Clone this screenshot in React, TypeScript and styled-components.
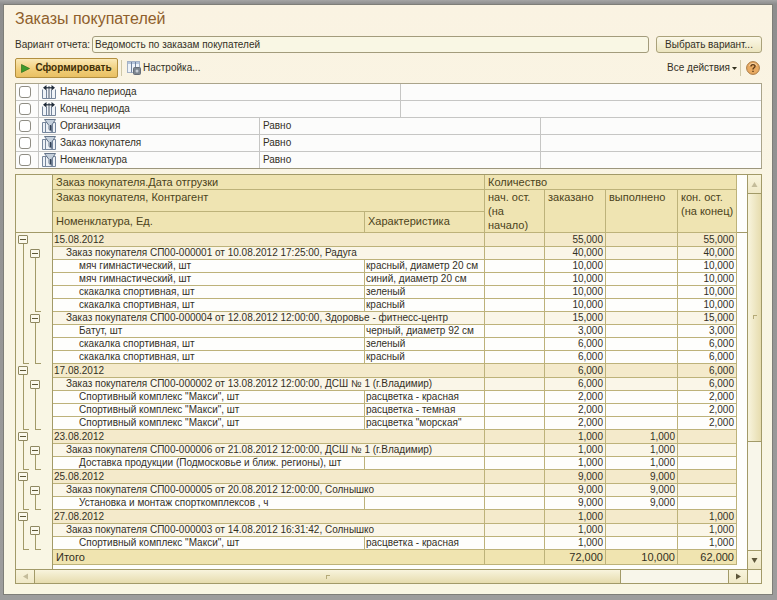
import React from "react";
import styled, { createGlobalStyle, css } from "styled-components";

const line = "#bdb27a";
const lineDark = "#a29a68";

const GlobalStyle = createGlobalStyle`
  *, *::before, *::after { box-sizing: border-box; }
  body {
    margin: 0;
    background: #9b9b9b;
    color: #33301f;
    font: 10px/14px "Liberation Sans", Arial, sans-serif;
  }
  button, input, select { font: inherit; color: inherit; }
`;

const Frame = styled.div`
  min-height: 100vh;
  display: flex;
  padding: 4px 4px 6px 3px;
  background: linear-gradient(#a5a5a5, #8e8e8e 4px, #9d9d9d);
`;

const Window = styled.main`
  flex: 1;
  min-width: 0;
  display: flex;
  flex-direction: column;
  padding: 5px 10px 10px 11px;
  border: 1px solid #7e7e78;
  background: linear-gradient(#faf3e2, #f9f5e4 40%, #f9f6e3);
`;

const Title = styled.h1`
  margin: 0 0 8px;
  color: #8f5f2c;
  font-size: 16px;
  line-height: 18px;
  font-weight: 400;
`;

const VariantRow = styled.div`
  display: flex;
  align-items: center;
  height: 17px;
`;

const FieldLabel = styled.label`
  margin-right: 2px;
`;

const TextField = styled.input`
  flex: 1;
  min-width: 0;
  height: 17px;
  padding: 0 2px;
  border: 1px solid #a39c7c;
  border-radius: 3px;
  background: #f9f7e4;
  outline: none;
`;

const ChooseButton = styled.button`
  width: 106px;
  height: 17px;
  margin-left: 7px;
  padding: 0;
  border: 1px solid #aaa27a;
  border-radius: 3px;
  background: linear-gradient(#fbf8e8, #ece5bf);
`;

const Toolbar = styled.div`
  display: flex;
  align-items: center;
  height: 20px;
  margin: 5px 0;
`;

const RunButton = styled.button`
  display: flex;
  align-items: center;
  justify-content: center;
  gap: 5px;
  width: 103px;
  height: 20px;
  padding: 0;
  border: 1px solid #b28f3f;
  border-radius: 2px;
  background: linear-gradient(#fbe9b6, #f0cd78 60%, #e9c063);
  color: #3f2f06;
  font-weight: 700;
`;

const Divider = styled.span`
  width: 1px;
  height: 16px;
  margin: 0 5px 0 3px;
  background: #cfc8a8;
`;

const FlatButton = styled.button`
  display: flex;
  align-items: center;
  gap: 2px;
  padding: 0;
  border: 0;
  background: none;
`;

const Spacer = styled.span`
  flex: 1;
`;

const HelpButton = styled(FlatButton)`
  margin-right: 2px;
`;

const Filters = styled.div`
  border: 1px solid #aaa48a;
  border-bottom-color: #9c967c;
  background: #fcfcfb;
`;

const FilterRow = styled.div<{ $columns: string }>`
  display: grid;
  grid-template-columns: 22px ${(p) => p.$columns};
  height: 17px;
  border-bottom: 1px solid #c6c6c4;
  &:last-child { border-bottom: 0; height: 16px; }
`;

const FilterCell = styled.div`
  display: flex;
  align-items: center;
  gap: 4px;
  min-width: 0;
  padding: 0 3px;
  border-left: 1px solid #c6c6c4;
  white-space: nowrap;
  &:first-child { border-left: 0; }
`;

const CheckBox = styled.input`
  appearance: none;
  width: 12px;
  height: 12px;
  margin: 0;
  border: 1px solid #8f8d84;
  border-radius: 3px;
  background: #fff;
  &:checked { background: #d9b55a; }
`;

const Report = styled.section`
  display: grid;
  grid-template-columns: minmax(0, 1fr) 14px;
  margin-top: 5px;
  border: 1px solid ${lineDark};
`;

const Sheet = styled.table`
  width: 100%;
  table-layout: fixed;
  border-collapse: separate;
  border-spacing: 0;
  background: #fefefc;
  line-height: 12px;
`;

const HeadCell = styled.th`
  padding: 0 1px 0 3px;
  border-right: 1px solid ${line};
  border-bottom: 1px solid ${line};
  background: #efe4b2;
  color: #4b431b;
  font-size: 11px;
  line-height: 14px;
  font-weight: 400;
  text-align: left;
  vertical-align: top;
`;

const HeadLow = styled(HeadCell)`
  padding-top: 2px;
`;

const HeadRow = styled.tr<{ $height: number }>`
  height: ${(p) => p.$height}px;
`;

const Gutter = styled.td`
  padding: 0 0 0 2px;
  border-right: 1px solid ${lineDark};
  background: #f9f6e4;
`;

const HeadGutter = styled(Gutter)`
  border-bottom: 1px solid ${lineDark};
`;

const Blank = styled.td<{ $ruled?: boolean }>`
  padding: 0;
  background: #fefefc;
  ${(p) => p.$ruled && css`border-bottom: 1px solid ${lineDark};`}
`;

type Level = "date" | "order" | "item" | "total";

const fills: Record<Level, string> = {
  date: "#f4eacb",
  order: "#faf6e8",
  item: "#fefefc",
  total: "#f0e4b0",
};
const heights: Record<Level, number> = { date: 14, order: 13, item: 13, total: 15 };
const indents: Record<Level, number> = { date: 1, order: 13, item: 26, total: 3 };

const BodyRow = styled.tr<{ $level: Level }>`
  height: ${(p) => heights[p.$level]}px;
  ${(p) => p.$level === "total" && css`font-size: 11px; line-height: 14px;`}
`;

const Cell = styled.td<{ $level: Level }>`
  padding: 0 0 0 1px;
  border-right: 1px solid ${line};
  border-bottom: 1px solid ${line};
  background: ${(p) => fills[p.$level]};
  white-space: nowrap;
`;

const NameCell = styled(Cell)`
  padding-left: ${(p) => indents[p.$level]}px;
`;

const NumberCell = styled(Cell)`
  padding-right: 2px;
  text-align: right;
`;

const Slots = styled.div<{ $level: Level }>`
  display: flex;
  height: ${(p) => heights[p.$level]}px;
`;

const Slot = styled.div<{ $line: "full" | "end" | "start" }>`
  display: flex;
  flex-direction: column;
  align-items: flex-end;
  width: 12px;
  padding: 2px 2px 0 0;
  background-image: linear-gradient(${lineDark}, ${lineDark})
    ${(p) => p.$line === "end" && css`, linear-gradient(${lineDark}, ${lineDark})`};
  background-repeat: no-repeat;
  background-position: 5px ${(p) => (p.$line === "start" ? "9px" : "0")}, 5px 100%;
  background-size: 1px 100%, 6px 1px;
`;

const Toggle = styled.button`
  display: flex;
  align-items: center;
  justify-content: center;
  width: 10px;
  height: 9px;
  padding: 0;
  border: 1px solid #8f8861;
  border-radius: 1px;
  background: #fbf9ec;
  &::before { content: ""; width: 6px; height: 1px; background: #5e5837; }
`;

const Bar = styled.div<{ $vertical?: boolean }>`
  display: flex;
  flex-direction: ${(p) => (p.$vertical ? "column" : "row")};
  background: #f8f6ea;
  ${(p) => (p.$vertical ? css`border-left` : css`height: 14px; border-top`)}: 1px solid ${lineDark};
`;

const ArrowButton = styled.button<{ $vertical?: boolean }>`
  display: flex;
  align-items: center;
  justify-content: center;
  flex: none;
  padding: 0;
  border: 0;
  background: linear-gradient(#f8f4dc, #efe8c6);
  ${(p) => (p.$vertical ? css`height: 18px;` : css`width: 18px;`)}
`;

const Thumb = styled.div<{ $share: number; $vertical?: boolean }>`
  display: flex;
  align-items: center;
  justify-content: center;
  flex: ${(p) => p.$share};
  border: 0 solid ${lineDark};
  border-width: ${(p) => (p.$vertical ? "1px 0" : "0 1px")};
  background: linear-gradient(${(p) => (p.$vertical ? "to right" : "to bottom")}, #f8f4dd, #e6dcae);
  &::before { content: ""; width: 4px; height: 4px; border: solid #b5aa78; border-width: 1px 0 0 1px; }
`;

const Track = styled.div<{ $share: number; $vertical?: boolean }>`
  flex: ${(p) => p.$share};
  border: 0 solid ${lineDark};
  border-width: ${(p) => (p.$vertical ? "0 0 1px" : "0 1px 0 0")};
`;

const Corner = styled.div`
  border: solid ${lineDark};
  border-width: 1px 0 0 1px;
  background: #faf7e8;
`;

const PlayIcon = () => (
  <svg width="9" height="9" viewBox="0 0 9 9" aria-hidden="true">
    <path d="M0.5 0.5 8.5 4.5 0.5 8.5Z" fill="#3f9a2c" stroke="#2d701d" strokeWidth="0.7" />
  </svg>
);

const SettingsIcon = () => (
  <svg width="14" height="14" viewBox="0 0 14 14" aria-hidden="true">
    <rect x="0.5" y="0.5" width="12" height="11" fill="#eef3f9" stroke="#a3b0c4" />
    <rect x="1" y="1" width="11" height="2" fill="#b4c5dc" />
    <path d="M4.5 1V11.5M8.5 1V11.5" stroke="#71839f" />
    <rect x="6.5" y="6.5" width="7" height="7" rx="1" fill="#7d8690" stroke="#666e78" />
    <circle cx="10" cy="10" r="1.5" fill="#c9d0d8" />
  </svg>
);

const PeriodIcon = () => (
  <svg width="14" height="14" viewBox="0 0 14 14" aria-hidden="true">
    <path d="M0.5 4.5V13.5H13.5V4.5M4.5 5V13M9.5 5V13" fill="#eef2f7" stroke="#76869c" />
    <path d="M7 1V13" stroke="#4c596b" />
    <path d="M3 2.8H11" stroke="#1f2a38" strokeWidth="1.2" />
    <path d="M1 2.8 4.5 0V5.6ZM13 2.8 9.5 0V5.6Z" fill="#1f2a38" />
  </svg>
);

const FunnelIcon = () => (
  <svg width="14" height="14" viewBox="0 0 14 14" aria-hidden="true">
    <path d="M0.5 3.5H13.5V13.5H0.5ZM3.5 4V13M10.5 4V13" fill="#edf1f6" stroke="#76869c" />
    <path d="M2.5 0.5H13.5L9.5 6.5V12.5L7 10.5V6.5Z" fill="#c4cfdb" stroke="#65758a" />
    <path d="M8.5 6V11" stroke="#334155" />
  </svg>
);

const HelpIcon = () => (
  <svg width="14" height="14" viewBox="0 0 14 14" aria-hidden="true">
    <circle cx="7" cy="7" r="6.4" fill="#e8aa62" stroke="#a97a45" />
    <path d="M3 4.6A5 5 0 0 1 11 4.6" stroke="#f8d9ae" fill="none" />
    <path d="M5 5.4C5 3 9 3 9 5.3C9 6.8 7 6.7 7 8.5M7 9.7V11" stroke="#5c3a18" strokeWidth="1.4" fill="none" />
  </svg>
);

const angles = { up: 0, right: 90, down: 180, left: 270 };
const Arrow = ({ to, color = "#5d563a" }: { to: keyof typeof angles; color?: string }) => (
  <svg width="7" height="7" viewBox="0 0 7 7" aria-hidden="true">
    <path d="M3.5 1 6.5 6H0.5Z" fill={color} transform={`rotate(${angles[to]} 3.5 3.5)`} />
  </svg>
);

const CaretIcon = () => (
  <svg width="5" height="3" viewBox="0 0 5 3" aria-hidden="true">
    <path d="M0 0H5L2.5 3Z" fill="#33301f" />
  </svg>
);

const filters = [
  { name: "Начало периода", period: true },
  { name: "Конец периода", period: true },
  { name: "Организация", period: false },
  { name: "Заказ покупателя", period: false },
  { name: "Номенклатура", period: false },
];

type Numbers = [string, string, string, string];
type Item = { name: string; feature: string; values: Numbers };
type Order = { name: string; values: Numbers; items: Item[] };
type Group = { date: string; values: Numbers; orders: Order[] };

const open = (n: string): Numbers => ["", n, "", n];
const done = (n: string): Numbers => ["", n, n, ""];

const groups: Group[] = [
  {
    date: "15.08.2012",
    values: open("55,000"),
    orders: [
      {
        name: "Заказ покупателя СП00-000001 от 10.08.2012 17:25:00, Радуга",
        values: open("40,000"),
        items: [
          { name: "мяч гимнастический, шт", feature: "красный, диаметр 20 см", values: open("10,000") },
          { name: "мяч гимнастический, шт", feature: "синий, диаметр 20 см", values: open("10,000") },
          { name: "скакалка спортивная, шт", feature: "зеленый", values: open("10,000") },
          { name: "скакалка спортивная, шт", feature: "красный", values: open("10,000") },
        ],
      },
      {
        name: "Заказ покупателя СП00-000004 от 12.08.2012 12:00:00, Здоровье - фитнесс-центр",
        values: open("15,000"),
        items: [
          { name: "Батут, шт", feature: "черный, диаметр 92 см", values: open("3,000") },
          { name: "скакалка спортивная, шт", feature: "зеленый", values: open("6,000") },
          { name: "скакалка спортивная, шт", feature: "красный", values: open("6,000") },
        ],
      },
    ],
  },
  {
    date: "17.08.2012",
    values: open("6,000"),
    orders: [
      {
        name: "Заказ покупателя СП00-000002 от 13.08.2012 12:00:00, ДСШ № 1 (г.Владимир)",
        values: open("6,000"),
        items: [
          { name: 'Спортивный комплекс "Макси", шт', feature: "расцветка - красная", values: open("2,000") },
          { name: 'Спортивный комплекс "Макси", шт', feature: "расцветка - темная", values: open("2,000") },
          { name: 'Спортивный комплекс "Макси", шт', feature: 'расцветка "морская"', values: open("2,000") },
        ],
      },
    ],
  },
  {
    date: "23.08.2012",
    values: done("1,000"),
    orders: [
      {
        name: "Заказ покупателя СП00-000006 от 21.08.2012 12:00:00, ДСШ № 1 (г.Владимир)",
        values: done("1,000"),
        items: [
          { name: "Доставка продукции (Подмосковье и ближ. регионы), шт", feature: "", values: done("1,000") },
        ],
      },
    ],
  },
  {
    date: "25.08.2012",
    values: done("9,000"),
    orders: [
      {
        name: "Заказ покупателя СП00-000005 от 20.08.2012 12:00:00, Солнышко",
        values: done("9,000"),
        items: [{ name: "Установка и монтаж спорткомплексов , ч", feature: "", values: done("9,000") }],
      },
    ],
  },
  {
    date: "27.08.2012",
    values: open("1,000"),
    orders: [
      {
        name: "Заказ покупателя СП00-000003 от 14.08.2012 16:31:42, Солнышко",
        values: open("1,000"),
        items: [
          { name: 'Спортивный комплекс "Макси", шт', feature: "расцветка - красная", values: open("1,000") },
        ],
      },
    ],
  },
];

const NumberCells = ({ level, values }: { level: Level; values: Numbers }) => (
  <>
    {values.map((value, i) => (
      <NumberCell key={i} $level={level}>{value}</NumberCell>
    ))}
    <Blank />
  </>
);

const GroupRows = ({ group }: { group: Group }) => (
  <>
    <BodyRow $level="date">
      <Gutter>
        <Slots $level="date">
          <Slot $line="start"><Toggle aria-label={`Свернуть ${group.date}`} /></Slot>
        </Slots>
      </Gutter>
      <NameCell $level="date" colSpan={2}>{group.date}</NameCell>
      <NumberCells level="date" values={group.values} />
    </BodyRow>
    {group.orders.map((order, o) => (
      <React.Fragment key={order.name}>
        <BodyRow $level="order">
          <Gutter>
            <Slots $level="order">
              <Slot $line="full" />
              <Slot $line="start"><Toggle aria-label={`Свернуть ${order.name}`} /></Slot>
            </Slots>
          </Gutter>
          <NameCell $level="order" colSpan={2}>{order.name}</NameCell>
          <NumberCells level="order" values={order.values} />
        </BodyRow>
        {order.items.map((item, i) => {
          const last = i === order.items.length - 1;
          return (
            <BodyRow key={i} $level="item">
              <Gutter>
                <Slots $level="item">
                  <Slot $line={last && o === group.orders.length - 1 ? "end" : "full"} />
                  <Slot $line={last ? "end" : "full"} />
                </Slots>
              </Gutter>
              <NameCell $level="item">{item.name}</NameCell>
              <Cell $level="item">{item.feature}</Cell>
              <NumberCells level="item" values={item.values} />
            </BodyRow>
          );
        })}
      </React.Fragment>
    ))}
  </>
);

const Column = styled.col<{ $width?: number }>`
  ${(p) => p.$width && css`width: ${p.$width}px;`}
`;

export default function App() {
  return (
    <>
      <GlobalStyle />
      <Frame>
        <Window>
          <Title>Заказы покупателей</Title>
          <VariantRow>
            <FieldLabel htmlFor="variant">Вариант отчета:</FieldLabel>
            <TextField id="variant" defaultValue="Ведомость по заказам покупателей" />
            <ChooseButton>Выбрать вариант...</ChooseButton>
          </VariantRow>
          <Toolbar>
            <RunButton><PlayIcon />Сформировать</RunButton>
            <Divider />
            <FlatButton><SettingsIcon />Настройка...</FlatButton>
            <Spacer />
            <FlatButton>Все действия<CaretIcon /></FlatButton>
            <Divider />
            <HelpButton aria-label="Справка"><HelpIcon /></HelpButton>
          </Toolbar>
          <Filters>
            {filters.map((f, i) => (
              <FilterRow key={f.name} $columns={f.period ? "1fr 1fr" : "11fr 14fr 11fr"}>
                <FilterCell><CheckBox type="checkbox" id={`filter-${i}`} /></FilterCell>
                <FilterCell>
                  {f.period ? <PeriodIcon /> : <FunnelIcon />}
                  <label htmlFor={`filter-${i}`}>{f.name}</label>
                </FilterCell>
                {!f.period && <FilterCell>Равно</FilterCell>}
                <FilterCell />
              </FilterRow>
            ))}
          </Filters>
          <Report>
            <Sheet>
              <colgroup>
                <Column $width={37} />
                <Column />
                <Column $width={120} />
                <Column $width={60} />
                <Column $width={61} />
                <Column $width={72} />
                <Column $width={59} />
                <Column $width={10} />
              </colgroup>
              <thead>
                <HeadRow $height={15}>
                  <HeadGutter rowSpan={3} />
                  <HeadCell colSpan={2}>Заказ покупателя.Дата отгрузки</HeadCell>
                  <HeadCell colSpan={4}>Количество</HeadCell>
                  <Blank rowSpan={3} $ruled />
                </HeadRow>
                <HeadRow $height={22}>
                  <HeadCell colSpan={2}>Заказ покупателя, Контрагент</HeadCell>
                  <HeadCell rowSpan={2}>нач. ост.<br />(на<br />начало)</HeadCell>
                  <HeadCell rowSpan={2}>заказано</HeadCell>
                  <HeadCell rowSpan={2}>выполнено</HeadCell>
                  <HeadCell rowSpan={2}>кон. ост.<br />(на конец)</HeadCell>
                </HeadRow>
                <HeadRow $height={21}>
                  <HeadLow>Номенклатура, Ед.</HeadLow>
                  <HeadLow>Характеристика</HeadLow>
                </HeadRow>
              </thead>
              <tbody>
                {groups.map((g) => <GroupRows key={g.date} group={g} />)}
                <BodyRow $level="total">
                  <Gutter />
                  <NameCell $level="total" colSpan={2}>Итого</NameCell>
                  <NumberCells level="total" values={["", "72,000", "10,000", "62,000"]} />
                </BodyRow>
                <HeadRow $height={4}>
                  <Gutter />
                  <Blank colSpan={7} />
                </HeadRow>
              </tbody>
            </Sheet>
            <Bar $vertical>
              <ArrowButton $vertical aria-label="Вверх"><Arrow to="up" color="#c4bc9a" /></ArrowButton>
              <Thumb $vertical $share={248} />
              <Track $vertical $share={109} />
              <ArrowButton $vertical aria-label="Вниз"><Arrow to="down" /></ArrowButton>
            </Bar>
            <Bar>
              <ArrowButton aria-label="Влево"><Arrow to="left" color="#c4bc9a" /></ArrowButton>
              <Thumb $share={588} />
              <Track $share={107} />
              <ArrowButton aria-label="Вправо"><Arrow to="right" /></ArrowButton>
            </Bar>
            <Corner />
          </Report>
        </Window>
      </Frame>
    </>
  );
}
